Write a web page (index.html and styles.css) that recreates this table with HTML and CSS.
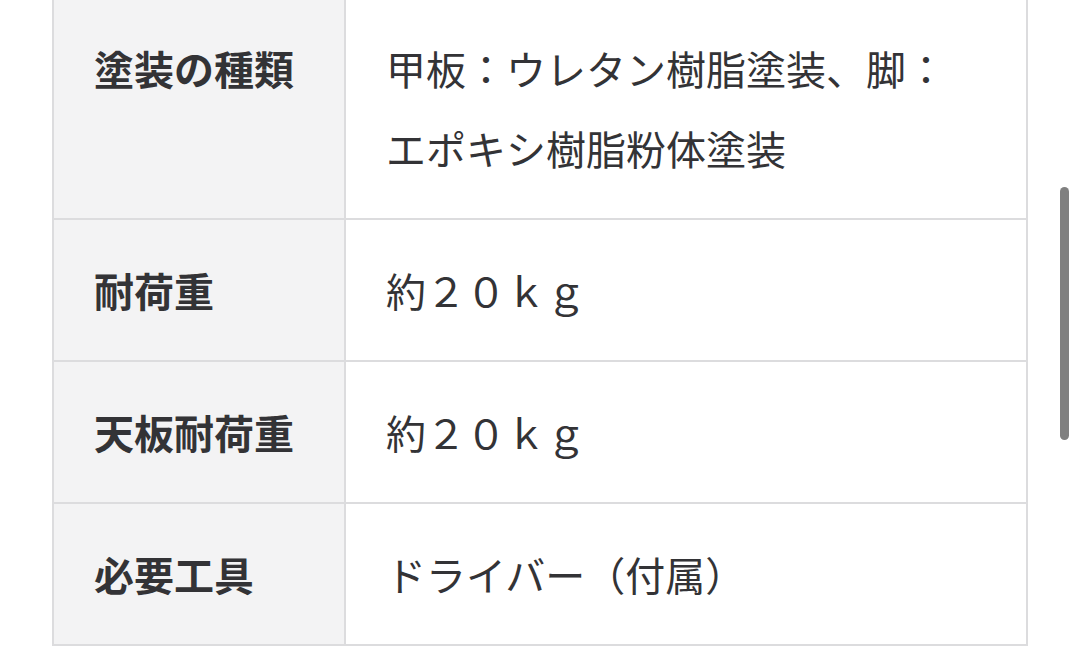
FILE: index.html
```html
<!DOCTYPE html>
<html lang="ja">
<head>
<meta charset="utf-8">
<link rel="stylesheet" href="styles.css">
</head>
<body>
<div class="page">
  <table class="spec">
    <tbody>
      <tr>
        <th>塗装の種類</th>
        <td>甲板：ウレタン樹脂塗装、脚：<br>エポキシ樹脂粉体塗装</td>
      </tr>
      <tr>
        <th>耐荷重</th>
        <td>約２０ｋｇ</td>
      </tr>
      <tr>
        <th>天板耐荷重</th>
        <td>約２０ｋｇ</td>
      </tr>
      <tr>
        <th>必要工具</th>
        <td>ドライバー（付属）</td>
      </tr>
    </tbody>
  </table>
</div>
<div class="scrollbar"></div>
</body>
</html>
```

FILE: styles.css
```css
html, body {
  margin: 0;
  padding: 0;
  background: #ffffff;
  overflow: hidden;
}

.page {
  padding-left: 52px;
  width: 976px;
  font-family: "Noto Sans CJK JP", "Noto Sans", sans-serif;
  color: #333336;
}

.spec {
  width: 976px;
  margin-top: -4px;
  border-collapse: collapse;
  font-size: 40px;
  line-height: 80px;
}

.spec th,
.spec td {
  border: 2px solid #dcdcde;
  padding: 30px 40px;
  text-align: left;
  vertical-align: top;
}

.spec th {
  width: 210px;
  background: #f3f3f4;
  font-weight: 700;
}

.spec td {
  background: #ffffff;
  font-weight: 400;
}

.scrollbar {
  position: fixed;
  left: 1060px;
  top: 187px;
  width: 9px;
  height: 253px;
  border-radius: 5px;
  background: #808080;
}
```
